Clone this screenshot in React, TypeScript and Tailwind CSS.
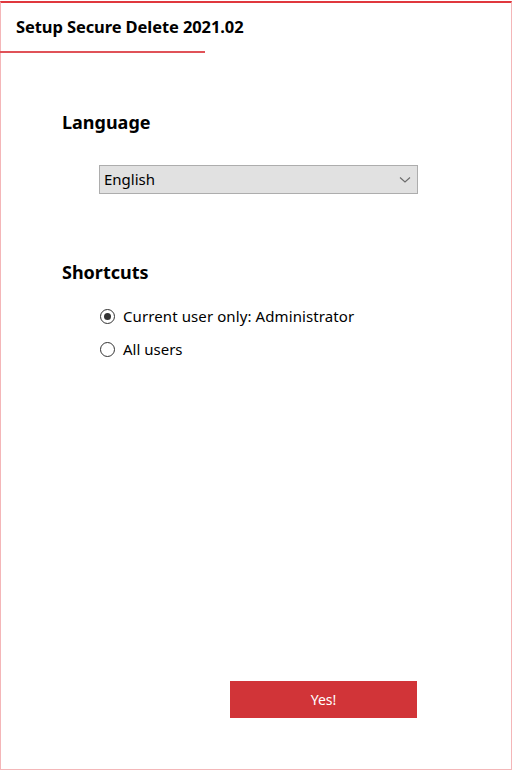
export default function App() {
  return (
    <div className="w-[513px] h-[771px] bg-white font-['Noto_Sans',sans-serif]">
      <div className="mt-px h-[769px] w-[512px] border-t-2 border-[#e0383e] border-x border-b border-x-[#f4b6b8] border-b-[#f4b6b8] flex flex-col">
        <div className="h-[48px] flex items-center pl-[15px]">
          <span className="text-[16.5px] font-bold text-black tracking-[-0.1px]">
            Setup Secure Delete 2021.02
          </span>
        </div>
        <div className="w-[205px] h-[2px] bg-[#e05258] -ml-px" />

        <div className="pl-[61px] pt-[56px]">
          <h2 className="text-[18px] font-bold text-black leading-[26px]">Language</h2>
          <div className="ml-[37px] mt-[30px] w-[319px] h-[29px] bg-[#e1e1e1] border border-[#adadad] flex items-center justify-between pl-[4px] pr-[5px]">
            <span className="text-[15px] text-black">English</span>
            <svg width="12" height="8" viewBox="0 0 12 8" className="mr-[1px]">
              <path d="M1 1.5 L6 6 L11 1.5" fill="none" stroke="#6b6b6b" strokeWidth="1.1" />
            </svg>
          </div>

          <h2 className="mt-[65px] text-[18px] font-bold text-black leading-[26px]">Shortcuts</h2>
          <div className="ml-[38px] mt-[21px] flex flex-col gap-[13px]">
            <label className="flex items-center gap-[8px] h-[20px]">
              <span className="w-[15px] h-[15px] rounded-full border border-[#333] flex items-center justify-center">
                <span className="w-[7px] h-[7px] rounded-full bg-[#333]" />
              </span>
              <span className="text-[15px] text-black tracking-[0.1px]">Current user only: Administrator</span>
            </label>
            <label className="flex items-center gap-[8px] h-[20px]">
              <span className="w-[15px] h-[15px] rounded-full border border-[#333]" />
              <span className="text-[15px] text-black">All users</span>
            </label>
          </div>
        </div>

        <div className="mt-auto mb-[51px] ml-[229px] w-[187px] h-[37px] bg-[#d13438] flex items-center justify-center">
          <span className="text-[14px] text-white">Yes!</span>
        </div>
      </div>
    </div>
  );
}
